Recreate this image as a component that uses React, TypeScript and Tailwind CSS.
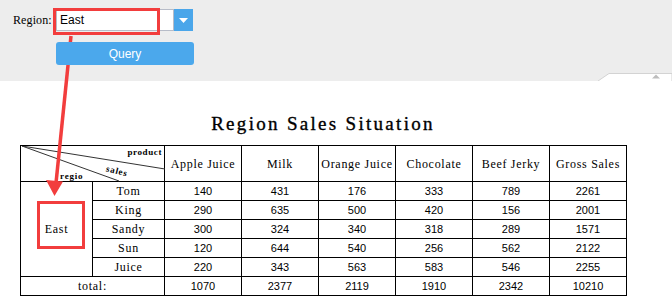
const serif = "font-['Liberation_Serif','Times_New_Roman',serif]";
const sans = "font-['Liberation_Sans',Arial,sans-serif]";

type Row = { name: string; values: number[] };

const products = ["Apple Juice", "Milk", "Orange Juice", "Chocolate", "Beef Jerky", "Gross Sales"];

const rows: Row[] = [
  { name: "Tom", values: [140, 431, 176, 333, 789, 2261] },
  { name: "King", values: [290, 635, 500, 420, 156, 2001] },
  { name: "Sandy", values: [300, 324, 340, 318, 289, 1571] },
  { name: "Sun", values: [120, 644, 540, 256, 562, 2122] },
  { name: "Juice", values: [220, 343, 563, 583, 546, 2255] },
];

const totals = [1070, 2377, 2119, 1910, 2342, 10210];

const cell = "border border-black p-0 text-center align-middle";
const label = `${serif} text-[12px] tracking-[0.7px] text-black`;
const num = `${sans} text-[11px] text-black`;

function DiagonalHeader() {
  return (
    <th colSpan={2} className={`${cell} relative h-[36px]`}>
      <svg className="absolute inset-0" width="144" height="36" aria-hidden>
        <line x1="1" y1="0" x2="144" y2="23" stroke="#333" strokeWidth="1" />
        <line x1="1" y1="0" x2="98" y2="35" stroke="#333" strokeWidth="1" />
      </svg>
      <span className={`${serif} absolute right-[2px] top-[1px] text-[9px] font-bold leading-[10px] tracking-[0.6px]`}>
        product
      </span>
      <span
        className={`${serif} absolute left-[85px] top-[20px] rotate-[14deg] text-[9px] font-bold leading-[10px] tracking-[0.8px]`}
      >
        sales
      </span>
      <span className={`${serif} absolute left-[39px] top-[25px] text-[9px] font-bold leading-[10px] tracking-[0.8px]`}>
        regio
      </span>
    </th>
  );
}

export default function App() {
  return (
    <div className="relative h-[307px] w-[672px] overflow-hidden bg-white">
      {/* query bar */}
      <div className="relative h-[81px] bg-[#ededed] pl-[13px] pt-[9px]">
        <div className="flex h-[22px] items-center">
          <span className={`${serif} w-[43px] text-[12px] tracking-[0.1px] text-black`}>Region:</span>
          <div className="flex h-[22px] w-[137px]">
            <div className="flex flex-1 items-center border border-[#b7bcc8] bg-white pl-[3px]">
              <span className={`${sans} text-[12px] text-black`}>East</span>
            </div>
            <div className="flex w-[19px] items-center justify-center bg-[#4aa6ea]">
              <svg width="9" height="5" viewBox="0 0 9 5" aria-hidden>
                <path d="M0 0h9L4.5 5z" fill="#fff" />
              </svg>
            </div>
          </div>
        </div>
        <button
          type="button"
          className={`${sans} relative z-10 ml-[43px] mt-[11px] flex h-[23px] w-[138px] items-center justify-center rounded-[3px] bg-[#4ba8ec] text-[12px] text-white`}
        >
          Query
        </button>
        <svg className="absolute bottom-0 right-0" width="74" height="8" aria-hidden>
          <path d="M0 8L11 0.5H74V8" fill="#fff" stroke="#d3d3d3" strokeWidth="1" />
          <path d="M54 5.5L58 1.5L62 5.5z" fill="#bdbdbd" />
        </svg>
      </div>

      {/* report */}
      <div className="ml-[20px] w-[606px]">
        <h1
          className={`${serif} mt-[31px] text-center text-[19px] leading-[24px] tracking-[2.3px] text-black [-webkit-text-stroke:0.35px_black]`}
        >
          Region Sales Situation
        </h1>
        <table className="mt-[9px] w-[606px] table-fixed border-collapse">
          <colgroup>
            <col className="w-[72px]" />
            <col className="w-[72px]" />
            {products.map((p) => (
              <col key={p} className="w-[77px]" />
            ))}
          </colgroup>
          <thead>
            <tr>
              <DiagonalHeader />
              {products.map((p) => (
                <th key={p} className={`${cell} ${label} h-[36px] whitespace-nowrap font-normal`}>
                  {p}
                </th>
              ))}
            </tr>
          </thead>
          <tbody>
            {rows.map((r, i) => (
              <tr key={r.name}>
                {i === 0 ? (
                  <td rowSpan={5} className={`${cell} ${label}`}>
                    East
                  </td>
                ) : null}
                <td className={`${cell} ${label} h-[19px]`}>{r.name}</td>
                {r.values.map((v, j) => (
                  <td key={j} className={`${cell} ${num} h-[19px]`}>
                    {v}
                  </td>
                ))}
              </tr>
            ))}
            <tr>
              <td colSpan={2} className={`${cell} ${label} h-[19px]`}>
                total:
              </td>
              {totals.map((v, j) => (
                <td key={j} className={`${cell} ${num} h-[19px]`}>
                  {v}
                </td>
              ))}
            </tr>
          </tbody>
        </table>
      </div>

      {/* annotations */}
      <svg className="pointer-events-none absolute inset-0 z-[5]" width="672" height="307" aria-hidden>
        <line x1="71" y1="36" x2="56" y2="183" stroke="#f23d3d" strokeWidth="3.5" />
        <path d="M46 180L63 181.5L54.5 196z" fill="#f23d3d" />
      </svg>
      <div className="pointer-events-none absolute left-[53px] top-[8px] z-20 h-[27px] w-[107px] border-[3px] border-[#f23d3d]" />
      <div className="pointer-events-none absolute left-[37px] top-[201px] z-20 h-[48px] w-[48px] border-[3px] border-[#f23d3d]" />
    </div>
  );
}
